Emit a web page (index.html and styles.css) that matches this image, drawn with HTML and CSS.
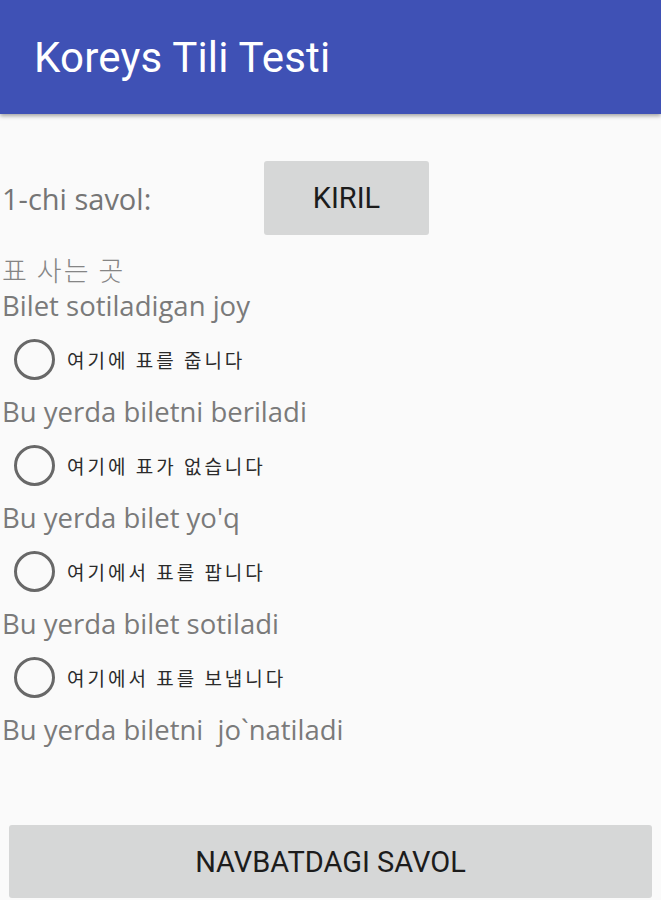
FILE: index.html
```html
<!DOCTYPE html>
<html lang="uz">
<head>
<meta charset="utf-8">
<title>Koreys Tili Testi</title>
<link rel="stylesheet" href="styles.css">
</head>
<body>
<header class="appbar"><h1 class="title">Koreys Tili Testi</h1></header>
<main class="content">
  <div class="qrow">
    <span class="qnum">1-chi savol:</span>
    <button class="btn btn-kiril">KIRIL</button>
  </div>
  <p class="korean">표 사는 곳</p>
  <p class="label">Bilet sotiladigan joy</p>
  <label class="radio"><span class="circle"></span><span class="rtext">여기에 표를 줍니다</span></label>
  <p class="label">Bu yerda biletni beriladi</p>
  <label class="radio"><span class="circle"></span><span class="rtext">여기에 표가 없습니다</span></label>
  <p class="label">Bu yerda bilet yo'q</p>
  <label class="radio"><span class="circle"></span><span class="rtext">여기에서 표를 팝니다</span></label>
  <p class="label">Bu yerda bilet sotiladi</p>
  <label class="radio"><span class="circle"></span><span class="rtext">여기에서 표를 보냅니다</span></label>
  <p class="label">Bu yerda biletni&nbsp; jo`natiladi</p>
</main>
<footer class="footer"><button class="btn btn-next">NAVBATDAGI SAVOL</button></footer>
</body>
</html>
```
FILE: styles.css
```css
* { box-sizing: border-box; }
html, body { margin: 0; padding: 0; }
body {
  width: 661px;
  height: 900px;
  background: #fafafa;
  font-family: "Open Sans", "Noto Sans CJK KR", sans-serif;
  overflow: hidden;
  display: flex;
  flex-direction: column;
}
.appbar {
  height: 114px;
  background: #3f51b5;
  box-shadow: 0 2px 4px rgba(0,0,0,0.35);
  display: flex;
  align-items: center;
  padding-left: 34px;
  flex-shrink: 0;
}
.title {
  margin: 0;
  font-family: Roboto, sans-serif;
  font-weight: 400;
  font-size: 42px;
  letter-spacing: 0.2px;
  color: #fff;
}
.content {
  padding: 47px 0 0 2px;
  flex: 1;
  display: flex;
  flex-direction: column;
}
.qrow {
  display: flex;
  align-items: center;
  height: 74px;
}
.qnum {
  width: 262px;
  font-size: 29px;
  color: #757575;
}
.btn {
  border: none;
  border-radius: 3px;
  background: #d6d7d7;
  font-family: Roboto, sans-serif;
  font-size: 29px;
  color: #1c1c1c;
  padding: 0;
}
.btn-kiril {
  width: 165px;
  height: 74px;
}
.korean {
  margin: 18px 0 0 0;
  font-size: 27px;
  line-height: 34px;
  letter-spacing: 2px;
  color: #858585;
  font-family: "Noto Sans CJK KR", sans-serif;
  font-weight: 300;
}
.label {
  margin: 0;
  font-size: 27.5px;
  line-height: 34px;
  color: #7a7a7a;
}
.korean + .label { margin-top: 2px; }
.radio {
  display: flex;
  align-items: center;
  height: 72px;
  padding-left: 12px;
}
.circle {
  width: 41px;
  height: 41px;
  border: 3px solid #686868;
  border-radius: 50%;
  flex-shrink: 0;
}
.rtext {
  margin-left: 12px;
  font-family: "Noto Sans CJK KR", sans-serif;
  font-size: 19px;
  letter-spacing: 3px;
  color: #2b2b2b;
}
.footer {
  padding: 0 9px 2px 9px;
  flex-shrink: 0;
}
.btn-next {
  width: 643px;
  height: 73px;
}
```
